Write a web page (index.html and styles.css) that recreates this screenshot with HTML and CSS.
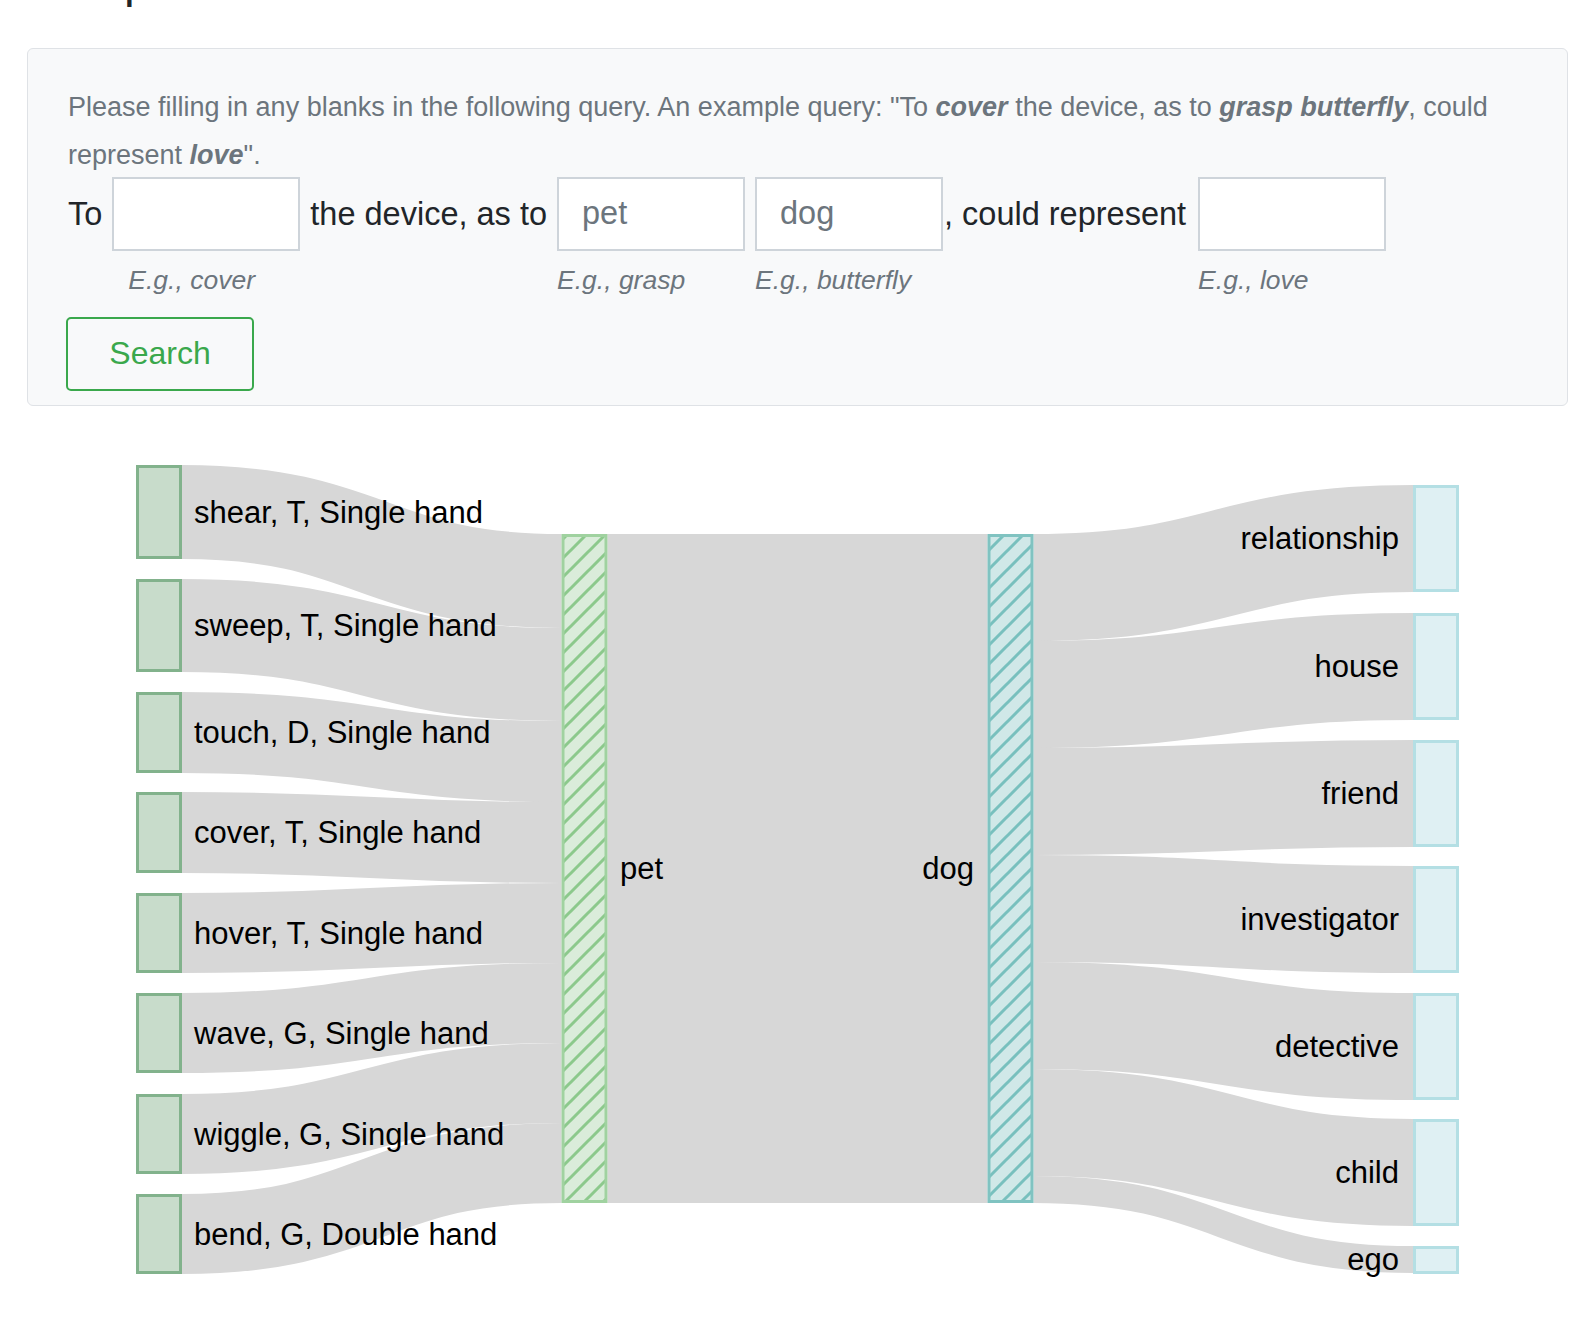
FILE: index.html
```html
<!DOCTYPE html>
<html lang="en">
<head>
<meta charset="utf-8">
<title>Explore</title>
<link rel="stylesheet" href="styles.css">
</head>
<body>
<main class="page">
  <h1 class="title">Explore</h1>
  <section class="panel">
    <p class="intro">Please filling in any blanks in the following query. An example query: "To <em class="kw">cover</em> the device, as to <em class="kw">grasp butterfly</em>, could represent <em class="kw">love</em>".</p>
    <form class="query">
      <span class="word">To</span>
      <label class="field">
        <input class="box" type="text">
        <span class="hint hint-indent">E.g., cover</span>
      </label>
      <span class="word">the device, as to</span>
      <label class="field">
        <input class="box" type="text" placeholder="pet">
        <span class="hint">E.g., grasp</span>
      </label>
      <label class="field">
        <input class="box" type="text" placeholder="dog">
        <span class="hint">E.g., butterfly</span>
      </label>
      <span class="word word-tight">, could represent</span>
      <label class="field">
        <input class="box" type="text">
        <span class="hint">E.g., love</span>
      </label>
    </form>
    <button class="search" type="button">Search</button>
  </section>
</main>
<svg class="sankey" width="1578" height="916" viewBox="0 420 1578 916" xmlns="http://www.w3.org/2000/svg">
  <defs>
    <pattern id="hatch-pet" patternUnits="userSpaceOnUse" width="19" height="19">
      <rect width="19" height="19" fill="#daecda"/>
      <path d="M-2,2 L2,-2 M0,19 L19,0 M17,21 L21,17" stroke="#8cc98c" stroke-width="3"/>
    </pattern>
    <pattern id="hatch-dog" patternUnits="userSpaceOnUse" width="19" height="19">
      <rect width="19" height="19" fill="#d0e8e8"/>
      <path d="M-2,2 L2,-2 M0,19 L19,0 M17,21 L21,17" stroke="#78c0be" stroke-width="3"/>
    </pattern>
  </defs>
  <g class="links">
    <path d="M182,512 C371.75,512 371.75,581 561.5,581" stroke-width="94"/>
    <path d="M182,625.5 C371.75,625.5 371.75,674.5 561.5,674.5" stroke-width="93"/>
    <path d="M182,732.5 C371.75,732.5 371.75,761.5 561.5,761.5" stroke-width="81"/>
    <path d="M182,832.5 C371.75,832.5 371.75,842.5 561.5,842.5" stroke-width="81"/>
    <path d="M182,933 C371.75,933 371.75,923 561.5,923" stroke-width="80"/>
    <path d="M182,1033 C371.75,1033 371.75,1003 561.5,1003" stroke-width="80"/>
    <path d="M182,1134 C371.75,1134 371.75,1083 561.5,1083" stroke-width="80"/>
    <path d="M182,1234 C371.75,1234 371.75,1163 561.5,1163" stroke-width="80"/>
    <path d="M607.5,868.5 L987.5,868.5" stroke-width="669"/>
    <path d="M1033.5,587.5 C1223.25,587.5 1223.25,538.5 1413,538.5" stroke-width="107"/>
    <path d="M1033.5,694.5 C1223.25,694.5 1223.25,666.5 1413,666.5" stroke-width="107"/>
    <path d="M1033.5,801.5 C1223.25,801.5 1223.25,793.5 1413,793.5" stroke-width="107"/>
    <path d="M1033.5,908.5 C1223.25,908.5 1223.25,919.5 1413,919.5" stroke-width="107"/>
    <path d="M1033.5,1015.5 C1223.25,1015.5 1223.25,1046.5 1413,1046.5" stroke-width="107"/>
    <path d="M1033.5,1122.5 C1223.25,1122.5 1223.25,1172.5 1413,1172.5" stroke-width="107"/>
    <path d="M1033.5,1189.5 C1223.25,1189.5 1223.25,1259.5 1413,1259.5" stroke-width="27"/>
  </g>
  <g class="nodes-left">
    <rect x="137.5" y="466.5" width="43" height="91"/>
    <rect x="137.5" y="580.5" width="43" height="90"/>
    <rect x="137.5" y="693.5" width="43" height="78"/>
    <rect x="137.5" y="793.5" width="43" height="78"/>
    <rect x="137.5" y="894.5" width="43" height="77"/>
    <rect x="137.5" y="994.5" width="43" height="77"/>
    <rect x="137.5" y="1095.5" width="43" height="77"/>
    <rect x="137.5" y="1195.5" width="43" height="77"/>
  </g>
  <rect class="node-pet" x="563" y="535.5" width="43" height="666"/>
  <rect class="node-dog" x="989" y="535.5" width="43" height="666"/>
  <g class="nodes-right">
    <rect x="1414.5" y="486.5" width="43" height="104"/>
    <rect x="1414.5" y="614.5" width="43" height="104"/>
    <rect x="1414.5" y="741.5" width="43" height="104"/>
    <rect x="1414.5" y="867.5" width="43" height="104"/>
    <rect x="1414.5" y="994.5" width="43" height="104"/>
    <rect x="1414.5" y="1120.5" width="43" height="104"/>
    <rect x="1414.5" y="1247.5" width="43" height="25"/>
  </g>
  <g class="labels">
    <text x="194" y="512" dy="0.35em">shear, T, Single hand</text>
    <text x="194" y="625.5" dy="0.35em">sweep, T, Single hand</text>
    <text x="194" y="732.5" dy="0.35em">touch, D, Single hand</text>
    <text x="194" y="832.5" dy="0.35em">cover, T, Single hand</text>
    <text x="194" y="933" dy="0.35em">hover, T, Single hand</text>
    <text x="194" y="1033" dy="0.35em">wave, G, Single hand</text>
    <text x="194" y="1134" dy="0.35em">wiggle, G, Single hand</text>
    <text x="194" y="1234" dy="0.35em">bend, G, Double hand</text>
    <text x="620" y="868.5" dy="0.35em">pet</text>
    <text class="end" x="974" y="868.5" dy="0.35em">dog</text>
    <text class="end" x="1399" y="538.5" dy="0.35em">relationship</text>
    <text class="end" x="1399" y="666.5" dy="0.35em">house</text>
    <text class="end" x="1399" y="793.5" dy="0.35em">friend</text>
    <text class="end" x="1399" y="919.5" dy="0.35em">investigator</text>
    <text class="end" x="1399" y="1046.5" dy="0.35em">detective</text>
    <text class="end" x="1399" y="1172.5" dy="0.35em">child</text>
    <text class="end" x="1399" y="1259.5" dy="0.35em">ego</text>
  </g>
</svg>
</body>
</html>
```
FILE: styles.css
```css
* {
  box-sizing: border-box;
}

html,
body {
  margin: 0;
  background: #ffffff;
  overflow: hidden;
}

body {
  font-family: "Liberation Sans", Arial, sans-serif;
  color: #212529;
}

.page {
  padding: 0 10px 0 27px;
}

.title {
  margin: -48px 0 38px 41px;
  font-size: 48px;
  font-weight: 400;
  line-height: 57.6px;
  color: #212529;
}

.panel {
  border: 1px solid #dfe2e6;
  border-radius: 6px;
  background: #f8f9fa;
  padding: 34px 40px 14px;
}

.intro {
  margin: 0 0 -2px;
  font-size: 27px;
  line-height: 48px;
  color: #6c757d;
}

.kw {
  font-weight: 700;
  font-style: italic;
}

.query {
  display: flex;
  align-items: flex-start;
  gap: 10px;
  margin: 0;
}

.word {
  font-size: 32.5px;
  line-height: 74px;
  white-space: nowrap;
  color: #212529;
}

.word-tight {
  margin: 0 2px 0 -9px;
}

.field {
  display: flex;
  flex-direction: column;
  width: 188px;
}

.box {
  display: block;
  width: 188px;
  height: 74px;
  margin: 0;
  padding: 0 23px;
  border: 2px solid #ced4da;
  border-radius: 0;
  background: #ffffff;
  font-family: "Liberation Sans", Arial, sans-serif;
  font-size: 32.5px;
  color: #6c757d;
  outline: none;
}

.box::placeholder {
  color: #6c757d;
  opacity: 1;
}

.hint {
  margin-top: 10px;
  font-size: 26.5px;
  font-style: italic;
  line-height: 39px;
  white-space: nowrap;
  color: #6c757d;
}

.hint-indent {
  padding-left: 16px;
}

.search {
  display: block;
  width: 188px;
  height: 74px;
  margin: 17px 0 0 -2px;
  padding: 0;
  border: 2px solid #3aa84c;
  border-radius: 5px;
  background: transparent;
  font-family: "Liberation Sans", Arial, sans-serif;
  font-size: 32px;
  color: #3aa84c;
}

.sankey {
  display: block;
  margin-top: 14px;
}

.links path {
  fill: none;
  stroke: #d7d7d7;
}

.nodes-left rect {
  fill: #c8dccb;
  stroke: #82b28c;
  stroke-width: 3;
}

.node-pet {
  fill: url(#hatch-pet);
  stroke: #a0d2a0;
  stroke-width: 3;
}

.node-dog {
  fill: url(#hatch-dog);
  stroke: #80c3c1;
  stroke-width: 3;
}

.nodes-right rect {
  fill: #dff0f3;
  stroke: #b4dfe4;
  stroke-width: 3;
}

.labels text {
  font-family: "Liberation Sans", Arial, sans-serif;
  font-size: 31px;
  fill: #000000;
}

.labels .end {
  text-anchor: end;
}
```
